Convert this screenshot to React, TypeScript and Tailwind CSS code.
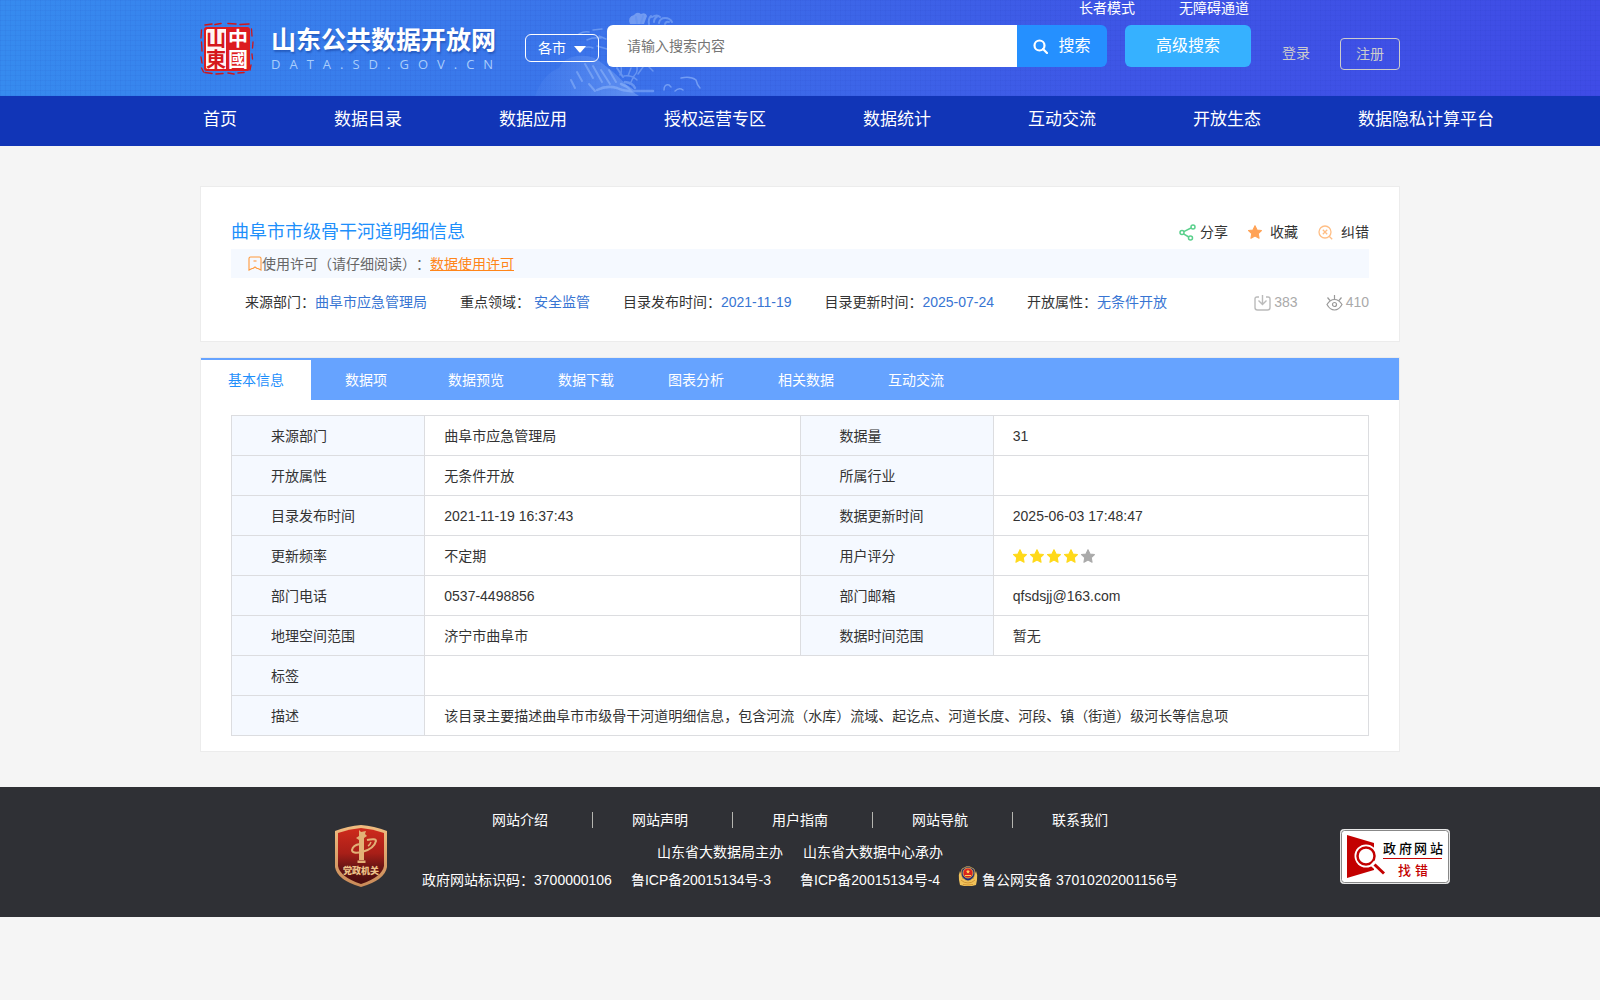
import React, { useState } from 'react';

const NAV_ITEMS = ['首页', '数据目录', '数据应用', '授权运营专区', '数据统计', '互动交流', '开放生态', '数据隐私计算平台'];

const TABS = ['基本信息', '数据项', '数据预览', '数据下载', '图表分析', '相关数据', '互动交流'];

const META = [
  { label: '来源部门：', value: '曲阜市应急管理局' },
  { label: '重点领域：', value: ' 安全监管' },
  { label: '目录发布时间：', value: '2021-11-19' },
  { label: '目录更新时间：', value: '2025-07-24' },
  { label: '开放属性：', value: '无条件开放' },
];

const ROWS: [string, string, string, React.ReactNode][] = [
  ['来源部门', '曲阜市应急管理局', '数据量', '31'],
  ['开放属性', '无条件开放', '所属行业', ''],
  ['目录发布时间', '2021-11-19 16:37:43', '数据更新时间', '2025-06-03 17:48:47'],
  ['更新频率', '不定期', '用户评分', <Rating key="rating" score={4} />],
  ['部门电话', '0537-4498856', '部门邮箱', 'qfsdsjj@163.com'],
  ['地理空间范围', '济宁市曲阜市', '数据时间范围', '暂无'],
];

const WIDE_ROWS = [
  ['标签', ''],
  ['描述', '该目录主要描述曲阜市市级骨干河道明细信息，包含河流（水库）流域、起讫点、河道长度、河段、镇（街道）级河长等信息项'],
];

const FOOTER_LINKS = ['网站介绍', '网站声明', '用户指南', '网站导航', '联系我们'];

function Star({ className }: { className: string }) {
  return (
    <svg viewBox="0.500 0.200 13 13" className={className} fill="currentColor" stroke="currentColor" strokeWidth="1" strokeLinejoin="round">
      <path d="M7 .8l1.900 4 4.100.500-3 2.900.8 4.300L7 10.400l-3.800 2.100.8-4.300-3-2.900 4.100-.5z" />
    </svg>
  );
}

function Rating({ score }: { score: number }) {
  return (
    <div className="flex gap-[3px]">
      {[1, 2, 3, 4, 5].map((n) => (
        <Star key={n} className={n <= score ? 'w-3.5 h-3.5 text-[#ffd91a]' : 'w-3.5 h-3.5 text-[#aaaaaa]'} />
      ))}
    </div>
  );
}

function Seal() {
  return (
    <svg viewBox="0 0 54 54" className="w-[54px] h-[54px] shrink-0">
      <defs>
        {/* red characters on the white half, white on the red half */}
        <linearGradient id="seal-ink" gradientUnits="userSpaceOnUse" x1="0" y1="0" x2="54" y2="0">
          <stop offset=".5" stopColor="#d5171c" />
          <stop offset=".5" stopColor="#ffffff" />
        </linearGradient>
      </defs>
      <g fill="none" stroke="#d0161b" strokeLinecap="round">
        <path d="M5 3l7-1M15 2.500l6-1M28 1.500l8 .5M40 2.500l9-.5" strokeWidth="1.600" />
        <path d="M1.500 8l-.5 8M1.500 20l.5 9M1 35l1 6M1.500 46l2 4" strokeWidth="1.300" />
        <path d="M51.500 7l.5 7M53 20l-.5 6M52 32l.5 5M51 43l-1 5" strokeWidth="1.300" />
        <path d="M5 50.500l7 1M16 52l7-.5M28 51l6 1M38 51l6-.5" strokeWidth="1.600" />
      </g>
      <rect x="4" y="5" width="46" height="44" rx="3" fill="#dc1c20" />
      <path d="M7.500 7H26v40H7.500Q6 47 6 45.500v-37Q6 7 7.500 7z" fill="#fff5f3" />
      <text x="38 38 16 16" y="24 45 24 45" textAnchor="middle" fontFamily="'Noto Sans CJK SC', sans-serif" fontSize="20" fontWeight="700" fill="url(#seal-ink)">中國山東</text>
      <rect x="5" y="6" width="44" height="42" rx="3" fill="none" stroke="#dc1c20" strokeWidth="1.500" />
    </svg>
  );
}

// Faint pine and mountain sketch behind the search bar
function Scenery() {
  return (
    <svg viewBox="0 0 180 96" className="absolute left-1/3 top-0 w-[180px] h-24 pointer-events-none" fill="none" stroke="#a9cbff" strokeLinecap="round">
      <defs>
        <linearGradient id="hill" x1="0" y1="0" x2="1" y2="0">
          <stop offset="0" stopColor="#6f9df5" stopOpacity=".1" />
          <stop offset="1" stopColor="#8fb6fa" stopOpacity=".45" />
        </linearGradient>
      </defs>
      <path d="M2 96Q10 74 26 68Q30 58 44 56Q60 54 70 64Q84 74 100 92L106 96z" fill="url(#hill)" stroke="none" />
      <g opacity=".4">
        <path d="M97 24q-3-7 4-9q3-4 7-1q5-2 6 2l-3 8z" fill="#c6dcff" stroke="none" />
        <path d="M116 24q-1-5 2-8M121 22q0-4 4-6M126 23q1-5 6-5q5 0 7 4M132 24q1-3 4-2M119 17q5-3 8 0M110 16l-2 7M103 17l1 6" strokeWidth="2" />
        <path d="M46 34q5-3 10-2M60 30l9-1M54 40q6-3 14-2M64 46l10 3M50 48q6-2 10 0M66 36l7 3" strokeWidth="1.500" />
        <path d="M44 72l5 9M52 64l8 14M60 66l9 16M68 70l9 14M76 70l7 12M84 68l6 9M38 80l4 8M56 84l6 7" strokeWidth="2" />
        <path d="M88 66q1 6-1 9M98 68l-3 8M104 67q1 5-3 9l-4 8M110 67l-5 7M116 67l4 4M91 76q8-1 13 4" strokeWidth="1.500" />
        <path d="M64 90q10-5 20-2q8 4 18 3h18M92 82q8 1 10 6M88 84q6 2 12 7" strokeWidth="2.500" />
      </g>
      <path d="M148 78q10-2 15 2q1 5 4 8M131 90q0-6 5-5l2 2M142 91q4-4 8-1" opacity=".5" strokeWidth="1.500" />
    </svg>
  );
}

function PartyBadge() {
  return (
    <svg viewBox="0 0 54 64" className="w-[54px] h-16 shrink-0">
      <defs>
        <linearGradient id="rim" x1="0" y1="0" x2="0" y2="1">
          <stop offset="0" stopColor="#f0bd80" />
          <stop offset="1" stopColor="#c98a58" />
        </linearGradient>
        <linearGradient id="shield" x1="0" y1="0" x2="0" y2="1">
          <stop offset="0" stopColor="#cf2a1c" />
          <stop offset=".45" stopColor="#a81f18" />
          <stop offset=".7" stopColor="#6a1514" />
          <stop offset="1" stopColor="#480c0d" />
        </linearGradient>
      </defs>
      <path d="M27 1Q40 2 53 7v36Q51 56 27 63Q3 56 1 43V7Q14 2 27 1z" fill="url(#rim)" />
      <path d="M27 4Q39 5 50 9v33Q48 53 27 60Q6 53 4 42V9Q15 5 27 4z" fill="url(#shield)" />
      <path d="M25 6l2 2 5-1-1 3 2 2-3 2v22h-5V16l-3-2 3-2zM23.500 36.500h8v2.500h-8z" fill="#e2b076" />
      <path d="M33 16q9-2 9 1-2 8-14 11-10 2-10-2 1-5 8-6" fill="none" stroke="#e2b076" strokeWidth="2" />
      <path d="M34 22q2-1 3-4" fill="none" stroke="#e2b076" strokeWidth="1.500" />
      <text x="27" y="50" textAnchor="middle" fontFamily="'Noto Sans CJK SC', sans-serif" fontSize="9" fontWeight="900" fill="#edc188">党政机关</text>
    </svg>
  );
}

function PoliceIcon() {
  return (
    <svg viewBox="0 0 20 21" className="w-5 h-[21px] mb-2">
      <path d="M2 5Q0 9 1 14l1 5 4 1h8l4-1 1-5q1-5-1-9l-3 8H5z" fill="#f1c25a" />
      <path d="M4 3Q2 9 5 12q3 3 5 3t5-3q3-3 1-9L10 0z" fill="#1d2a78" stroke="#d9b04f" strokeWidth=".8" />
      <circle cx="10" cy="7" r="5" fill="#d9221e" stroke="#f0bd4c" strokeWidth=".8" />
      <path d="M10 3.500l.6 1.300 1.400.2-1 1 .2 1.400-1.200-.7-1.200.7.2-1.400-1-1 1.400-.2zM7 9h6v1H7z" fill="#ffd35a" />
      <path d="M3 14q3 3 7 3t7-3M5 18.500q5 1 10 0" fill="none" stroke="#c98a2c" strokeWidth=".8" />
    </svg>
  );
}

function ReportSign() {
  return (
    <svg viewBox="0 0 110 55" className="w-[110px] h-[55px]">
      <rect x=".5" y=".5" width="109" height="54" rx="3" fill="#fff" stroke="#e8e8e8" />
      <rect x="1.500" y="1.500" width="107" height="52" rx="3" fill="#fff" stroke="#555" strokeWidth=".7" />
      <path d="M7 6l27 8v27L7 49z" fill="#c30000" />
      <circle cx="26" cy="27" r="11.500" fill="#fff" />
      <circle cx="26" cy="27" r="8.500" fill="#fff" stroke="#c30000" strokeWidth="2.500" />
      <path d="M32 34l12 11" stroke="#fff" strokeWidth="6" />
      <path d="M34.500 35.500L44 44.500" stroke="#c30000" strokeWidth="3" />
      <path d="M43 29.500h59" stroke="#c30000" />
      <g fontFamily="'Noto Sans CJK SC', sans-serif" fontSize="13" fontWeight="500">
        <text x="43 59 74 90" y="23.500" fill="#000">政府网站</text>
        <text x="58 75" y="46" fill="#c30000">找错</text>
      </g>
    </svg>
  );
}

function Header() {
  return (
    <header>
      <div className="relative h-24 bg-[repeating-linear-gradient(0deg,rgba(20,40,160,0.05)_0_1px,transparent_1px_5px),repeating-linear-gradient(90deg,rgba(20,40,160,0.05)_0_1px,transparent_1px_5px),linear-gradient(90deg,#368bef_0%,#3b73ea_38%,#3e56e6_70%,#3f4ce6_100%)]">
        <Scenery />
        <div className="relative mx-auto flex max-w-[1200px] items-start">
          <div className="mt-[22px] flex shrink-0 gap-[17px]">
            <Seal />
            <div className="w-[227px] whitespace-nowrap">
              <div className="text-[25px] leading-9 font-bold text-white [text-shadow:1px_2px_2px_rgba(20,60,150,0.5)]">山东公共数据开放网</div>
              <div className="font-['Open_Sans'] text-[13px] leading-3 tracking-[9px] text-[#a9cdfb]">DATA.SD.GOV.CN</div>
            </div>
          </div>

          <div className="relative mt-[34px] ml-[27px] shrink-0 text-white">
            <select aria-label="各市" className="h-7 w-[74px] appearance-none rounded-md border border-white pl-3 text-sm outline-none">
              <option className="text-black">各市</option>
            </select>
            <svg viewBox="0 0 12 7" className="pointer-events-none absolute right-[13px] top-3 w-3 h-[7px]" fill="currentColor">
              <path d="M0 0h12L7 6q-1 1-2 0z" />
            </svg>
          </div>

          <div className="ml-2 flex-1">
            <div className="flex h-[25px] justify-end gap-11 pr-[151px] text-sm leading-4 text-white">
              <a href="#">长者模式</a>
              <a href="#">无障碍通道</a>
            </div>
            <form className="flex items-start" onSubmit={(e) => e.preventDefault()}>
              <input
                type="text"
                aria-label="搜索内容"
                placeholder="请输入搜索内容"
                className="h-[42px] min-w-0 flex-1 rounded-l-md bg-white px-5 text-sm text-[#333] outline-none placeholder:text-[#757575]"
              />
              <button type="submit" className="flex h-[42px] w-[90px] items-center justify-center gap-2.5 rounded-r-md bg-[#2590ff] text-base text-white">
                <svg viewBox="0 0 15 15" className="w-[15px] h-[15px]" fill="none" stroke="currentColor" strokeWidth="2.200">
                  <circle cx="6.500" cy="6.500" r="5" />
                  <path d="M10 10l4 4" strokeLinecap="round" />
                </svg>
                搜索
              </button>
              <button type="button" className="ml-[18px] h-[42px] w-[126px] rounded-md bg-[#36b1ff] text-base text-white">高级搜索</button>
              <a href="#" className="mt-[13px] ml-[31px] text-sm leading-[31px] text-[#cccccc]">登录</a>
              <a href="#" className="mt-[13px] ml-[30px] h-8 w-[60px] rounded-sm border border-[#cccccc] text-center text-sm leading-[30px] text-[#cccccc]">注册</a>
            </form>
          </div>
        </div>
      </div>
      <nav className="h-[50px] bg-[#1135b7]">
        <div className="mx-auto flex max-w-[1200px] gap-[97px] whitespace-nowrap pl-[3px] text-[17px] leading-12 text-white">
          {NAV_ITEMS.map((item) => (
            <a key={item} href="#">{item}</a>
          ))}
        </div>
      </nav>
    </header>
  );
}

function SummaryCard() {
  return (
    <section className="border border-[#ececec] bg-white px-[30px] pt-7 pb-[15px]">
      <div className="flex h-[34px] items-center justify-between">
        <h1 className="text-lg text-[#1e8ffb]">曲阜市市级骨干河道明细信息</h1>
        <div className="flex gap-5 text-sm text-[#333]">
          <button className="flex items-center gap-1">
            <svg viewBox="0 0 17 17" className="w-[17px] h-[17px]" fill="none" stroke="#5ad08c" strokeWidth="1.500">
              <circle cx="3" cy="8.500" r="2" />
              <circle cx="14" cy="3" r="2" />
              <circle cx="11.500" cy="14" r="2" />
              <path d="M4.800 7.700L12 4M4.500 9.800l5.300 3.200" />
            </svg>
            分享
          </button>
          <button className="flex items-center gap-2">
            <Star className="w-3.5 h-3.5 text-[#ffa256]" />
            收藏
          </button>
          <button className="flex items-center gap-2">
            <svg viewBox="0 0 15 15" className="w-[15px] h-[15px]" fill="none" stroke="#ffbe85" strokeWidth="1.300">
              <circle cx="7" cy="7" r="6" />
              <path d="M4.800 4.800l4.400 4.400M9.200 4.800L4.800 9.200M11.200 11.200l3 3" />
            </svg>
            纠错
          </button>
        </div>
      </div>

      <div className="flex h-[29px] items-center bg-[#f5f9ff] pl-[17px] text-sm text-[#666]">
        <svg viewBox="0 0 14 15" className="w-3.5 h-[15px]" fill="none" stroke="#ff9a3c" strokeWidth="1.100">
          <path d="M2.500 1h9q1.500 0 1.500 1.500V14l-3-1.500H9L7 11l-2 1.500H4L1 14V2.500Q1 1 2.500 1z" />
          <path d="M5.500 5h3" />
        </svg>
        <span className="[text-spacing-trim:space-all]">使用许可（请仔细阅读）：</span>
        <a href="#" className="text-[#ff8519] underline">数据使用许可</a>
      </div>

      <div className="flex h-12 items-center justify-between pl-3.5 text-sm">
        <dl className="flex gap-[33px] whitespace-pre">
          {META.map((m) => (
            <div key={m.label} className="flex">
              <dt className="text-[#333]">{m.label}</dt>
              <dd className="text-[#3875d3]">{m.value}</dd>
            </div>
          ))}
        </dl>
        <div className="flex gap-7 text-[#aaaaaa]">
          <span className="flex items-center gap-[3px]">
            <svg viewBox="0 0 17 17" className="w-[17px] h-[17px]" fill="none" stroke="#bbbbbb" strokeWidth="1.400">
              <path d="M5 3H3Q1 3 1 5v8.500Q1 16 3.500 16h10q2.500 0 2.500-2.500V5q0-2-2-2h-2" />
              <path d="M8.500 1v9M4.500 6.500l4 4 4-4" />
            </svg>
            383
          </span>
          <span className="flex items-center gap-[3px]">
            <svg viewBox="0 0 17 17" className="w-[17px] h-[17px]" fill="none" stroke="#999999" strokeWidth="1.200">
              <path d="M1 10.500Q4 5.500 8.500 5.500T16 10.500Q13 16 8.500 16T1 10.500z" />
              <circle cx="8.500" cy="10.500" r="2" />
              <path d="M8.500 5V1M4 6.500L1.500 3.500M13 6.500l2.500-3" />
            </svg>
            410
          </span>
        </div>
      </div>
    </section>
  );
}

function DetailCard() {
  const [active, setActive] = useState(0);
  const head = 'w-[17%] border border-[#dcdde0] bg-[#f5f9ff] pl-[39px] text-left font-normal';
  const cell = 'border border-[#dcdde0] pl-[19px]';

  return (
    <section className="mt-[15px] border border-[#ececec] bg-white">
      <div role="tablist" className="flex bg-[#66a3ff] text-sm">
        {TABS.map((tab, i) => (
          <button
            key={tab}
            role="tab"
            aria-selected={i === active}
            onClick={() => setActive(i)}
            className={
              i === active
                ? 'h-[42px] w-[110px] border-t-2 border-[#66a3ff] bg-white text-[#1e8ffb]'
                : 'h-[42px] w-[110px] border-t-2 border-[#66a3ff] text-white'
            }
          >
            {tab}
          </button>
        ))}
      </div>
      <div className="px-[30px] py-[15px]">
        <table className="w-full table-fixed border-collapse text-sm text-[#333]">
          <tbody>
            {ROWS.map(([l1, v1, l2, v2]) => (
              <tr key={l1} className="h-10">
                <th scope="row" className={head}>{l1}</th>
                <td className={cell}>{v1}</td>
                <th scope="row" className={head}>{l2}</th>
                <td className={cell}>{v2}</td>
              </tr>
            ))}
            {WIDE_ROWS.map(([label, value]) => (
              <tr key={label} className="h-10">
                <th scope="row" className={head}>{label}</th>
                <td colSpan={3} className={cell}>{value}</td>
              </tr>
            ))}
          </tbody>
        </table>
      </div>
    </section>
  );
}

function Footer() {
  return (
    <footer className="mt-[35px] grid h-[130px] grid-cols-[1fr_auto_1fr] bg-[#2f3035] text-sm whitespace-nowrap text-white">
      <a href="#" aria-label="党政机关" className="mt-[37px] mr-[34px] justify-self-end">
        <PartyBadge />
      </a>
      <div className="flex flex-col items-center pt-[17px]">
        <ul className="flex h-8 items-center">
          {FOOTER_LINKS.map((link, i) => (
            <li key={link} className="flex items-center">
              {i > 0 && <span className="mr-[39px] ml-11 h-4 w-px bg-[#b5b5b0]" />}
              <a href="#">{link}</a>
            </li>
          ))}
        </ul>
        <div className="flex h-8 items-center gap-5">
          <span>山东省大数据局主办</span>
          <span>山东省大数据中心承办</span>
        </div>
        <div className="flex h-6 items-center">
          <span>政府网站标识码：3700000106</span>
          <a href="#" className="ml-[19px]">鲁ICP备20015134号-3</a>
          <a href="#" className="ml-[29px]">鲁ICP备20015134号-4</a>
          <a href="#" className="ml-[18px] flex items-center gap-1">
            <PoliceIcon />
            鲁公网安备 37010202001156号
          </a>
        </div>
      </div>
      <a href="#" aria-label="政府网站找错" className="mt-[42px] ml-[162px] justify-self-start">
        <ReportSign />
      </a>
    </footer>
  );
}

export default function App() {
  return (
    <div className="min-h-screen overflow-x-hidden bg-[#f5f5f5] font-['Liberation_Sans','Noto_Sans_CJK_SC',sans-serif]">
      <Header />
      <main className="mx-auto max-w-[1200px] pt-10">
        <SummaryCard />
        <DetailCard />
      </main>
      <Footer />
    </div>
  );
}
